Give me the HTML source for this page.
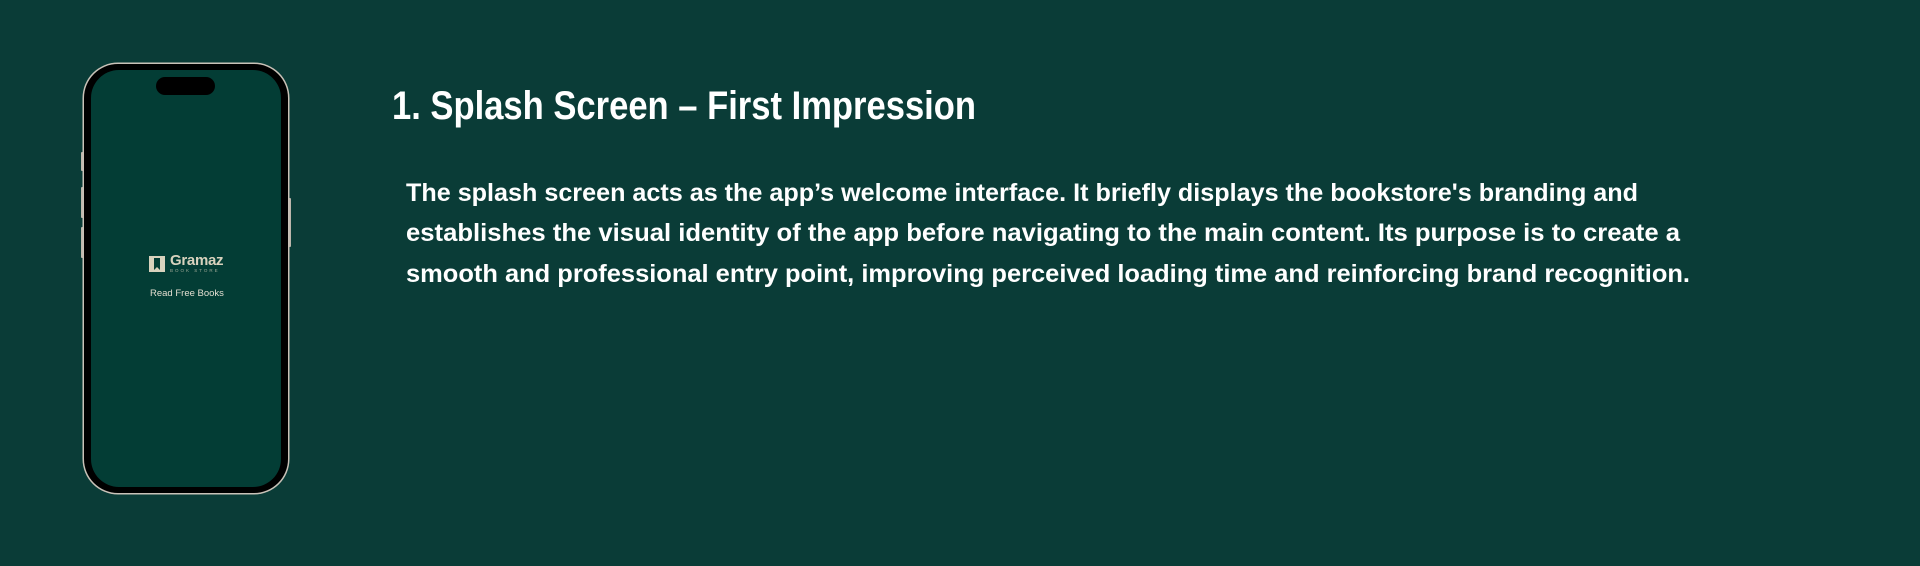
<!DOCTYPE html>
<html><head><meta charset="utf-8"><style>
html,body{margin:0;padding:0}
body{width:1920px;height:566px;background:#0a3c37;position:relative;overflow:hidden;font-family:"Liberation Sans",sans-serif}
.frame{position:absolute;left:84px;top:64px;width:204px;height:429px;border-radius:34px;background:#000;box-shadow:0 0 0 1.5px #c9c2b8}
.screen{position:absolute;left:91px;top:70px;width:190px;height:417px;border-radius:28px;background:#033d35}
.island{position:absolute;left:156px;top:77px;width:59px;height:18px;border-radius:9px;background:#000}
.btn{position:absolute;width:3px;background:#bdb6ac;border-radius:1px}
.logo{position:absolute;left:149px;top:256px;width:16px;height:16px;background:#d8d2bd}
.logo:after{content:"";position:absolute;left:5px;top:2px;width:6px;height:12px;background:#033d35;clip-path:polygon(0 0,100% 0,100% 100%,50% 75%,0 100%)}
.gname{position:absolute;left:170px;top:252px;font-size:15px;font-weight:bold;color:#d8d2bd;letter-spacing:-0.3px}
.gsub{position:absolute;left:170px;top:268px;font-size:4.5px;color:#9da896;letter-spacing:2px}
.rfb{position:absolute;left:150px;top:288px;font-size:9.5px;color:#e2ddd0}
.t{position:absolute;left:392px;color:#fff;font-weight:bold;white-space:nowrap;transform-origin:0 0}
</style></head><body>
<div class="btn" style="left:81px;top:152px;height:19px"></div>
<div class="btn" style="left:81px;top:187px;height:31px"></div>
<div class="btn" style="left:81px;top:227px;height:31px"></div>
<div class="btn" style="left:288px;top:198px;height:49px"></div>
<div class="frame"></div>
<div class="screen"></div>
<div class="island"></div>
<div class="logo"></div>
<div class="gname">Gramaz</div>
<div class="gsub">BOOK STORE</div>
<div class="rfb">Read Free Books</div>
<div class="t" id="t0" data-w="584" style="top:84px;font-size:40px">1. Splash Screen – First Impression</div>
<div class="t" id="t1" data-w="1232" style="left:406px;top:179px;font-size:25px">The splash screen acts as the app’s welcome interface. It briefly displays the bookstore's branding and</div>
<div class="t" id="t2" data-w="1274" style="left:406px;top:219px;font-size:25px">establishes the visual identity of the app before navigating to the main content. Its purpose is to create a</div>
<div class="t" id="t3" data-w="1284" style="left:406px;top:260px;font-size:25px">smooth and professional entry point, improving perceived loading time and reinforcing brand recognition.</div>
<script>
document.querySelectorAll('.t').forEach(function(e){var w=+e.getAttribute('data-w');var r=e.getBoundingClientRect().width;e.style.transform='scaleX('+(w/r)+')';});
</script>
</body></html>
